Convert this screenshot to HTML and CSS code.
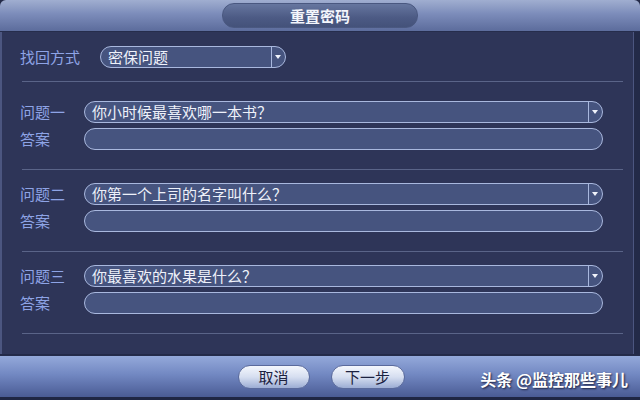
FILE: index.html
```html
<!DOCTYPE html>
<html>
<head>
    <title>重置密码</title>
    <meta charset="UTF-8">
    <link rel="stylesheet" href="styles.css">
</head>
<body>

<div class="dialog">
    <div class="titlebar">
        <div class="title">重置密码</div>
    </div>

    <div class="content">
        <div class="row method">
            <span class="label wide">找回方式</span>
            <div class="combo short">
                <span class="value">密保问题</span>
                <span class="arrow"></span>
            </div>
        </div>
        <hr>

        <div class="question first">
            <div class="row">
                <span class="label">问题一</span>
                <div class="combo">
                    <span class="value">你小时候最喜欢哪一本书？</span>
                    <span class="arrow"></span>
                </div>
            </div>
            <div class="row">
                <span class="label">答案</span>
                <div class="field"></div>
            </div>
        </div>
        <hr>

        <div class="question">
            <div class="row">
                <span class="label">问题二</span>
                <div class="combo">
                    <span class="value">你第一个上司的名字叫什么？</span>
                    <span class="arrow"></span>
                </div>
            </div>
            <div class="row">
                <span class="label">答案</span>
                <div class="field"></div>
            </div>
        </div>
        <hr>

        <div class="question">
            <div class="row">
                <span class="label">问题三</span>
                <div class="combo">
                    <span class="value">你最喜欢的水果是什么？</span>
                    <span class="arrow"></span>
                </div>
            </div>
            <div class="row">
                <span class="label">答案</span>
                <div class="field"></div>
            </div>
        </div>
        <hr>
    </div>

    <div class="footer">
        <button class="btn">取消</button>
        <button class="btn next">下一步</button>
        <div class="watermark">头条 @监控那些事儿</div>
    </div>
</div>

</body>
</html>
```

FILE: styles.css
```css
body {
    margin: 0;
    background: #232a48;
    font-family: "Noto Sans CJK SC", "Noto Sans", sans-serif;
}

.dialog {
    width: 640px;
    height: 400px;
    display: flex;
    flex-direction: column;
    background: #232a48;
}

.titlebar {
    height: 31px;
    border-bottom: 1px solid #262d4c;
    border-radius: 6px 6px 0 0;
    background: linear-gradient(#a0aed0, #7c8cba 45%, #5c6c9c);
    display: flex;
    justify-content: center;
    align-items: center;
}

.title {
    width: 194px;
    height: 23px;
    border-radius: 12px;
    border: 1px solid #4a5880;
    background: linear-gradient(#66769f, #4c5a84 60%, #44527a);
    color: #f4f6fc;
    font-size: 15px;
    font-weight: bold;
    line-height: 23px;
    text-align: center;
}

.content {
    flex: 1;
    background: #2e3558;
    border-left: 2px solid #4c5680;
    border-right: 1px solid #4c5680;
    margin-right: 6px;
    padding: 0 10px 0 18px;
}

.row {
    display: flex;
    align-items: center;
    height: 23px;
}

.method {
    margin-top: 13px;
}

.question {
    margin-top: 12px;
    display: flex;
    flex-direction: column;
    gap: 4px;
}

.question.first {
    margin-top: 18px;
}

.label {
    width: 64px;
    color: #8ea4e6;
    font-size: 15px;
    flex-shrink: 0;
}

.label.wide {
    width: 80px;
}

.combo, .field {
    flex: 1;
    height: 20px;
    margin-right: 20px;
    border: 1.5px solid #a9b8de;
    border-radius: 11px;
    background: #46547f;
    display: flex;
    align-items: center;
}

.combo.short {
    flex: none;
    width: 184px;
}

.value {
    flex: 1;
    padding-left: 7px;
    color: #eef1fa;
    font-size: 15px;
    white-space: nowrap;
}

.arrow {
    width: 13px;
    height: 100%;
    border-left: 1.5px solid #a9b8de;
    display: flex;
    align-items: center;
    justify-content: center;
}

.arrow::after {
    content: "";
    border-left: 3.5px solid transparent;
    border-right: 3.5px solid transparent;
    border-top: 4px solid #f0f3fb;
    margin-left: -2px;
}

hr {
    border: 0;
    border-top: 1px solid #5a6488;
    margin: 19px 0 0 2px;
}

.method + hr {
    margin-top: 13px;
}

.footer {
    position: relative;
    height: 41px;
    margin-top: 1px;
    border-top: 1px solid #252c4a;
    border-bottom: 3px solid #1f2644;
    background: linear-gradient(#94a9da, #7288c2 45%, #4a5b94);
    display: flex;
    justify-content: center;
    align-items: center;
    gap: 21px;
    padding-left: 2px;
}

.btn {
    width: 72px;
    height: 24px;
    padding: 0;
    border: 1px solid #5a6a9c;
    border-radius: 12px;
    background: linear-gradient(#f4f7fd, #d6def0 50%, #9cadd4);
    color: #1c2240;
    font-family: inherit;
    font-size: 15px;
    line-height: 22px;
    white-space: nowrap;
}

.btn.next {
    width: 74px;
}

.watermark {
    position: absolute;
    right: 12px;
    top: 11px;
    color: #ffffff;
    font-size: 16px;
    font-weight: bold;
    text-shadow: 1px 1px 2px #1a2040;
}
```
